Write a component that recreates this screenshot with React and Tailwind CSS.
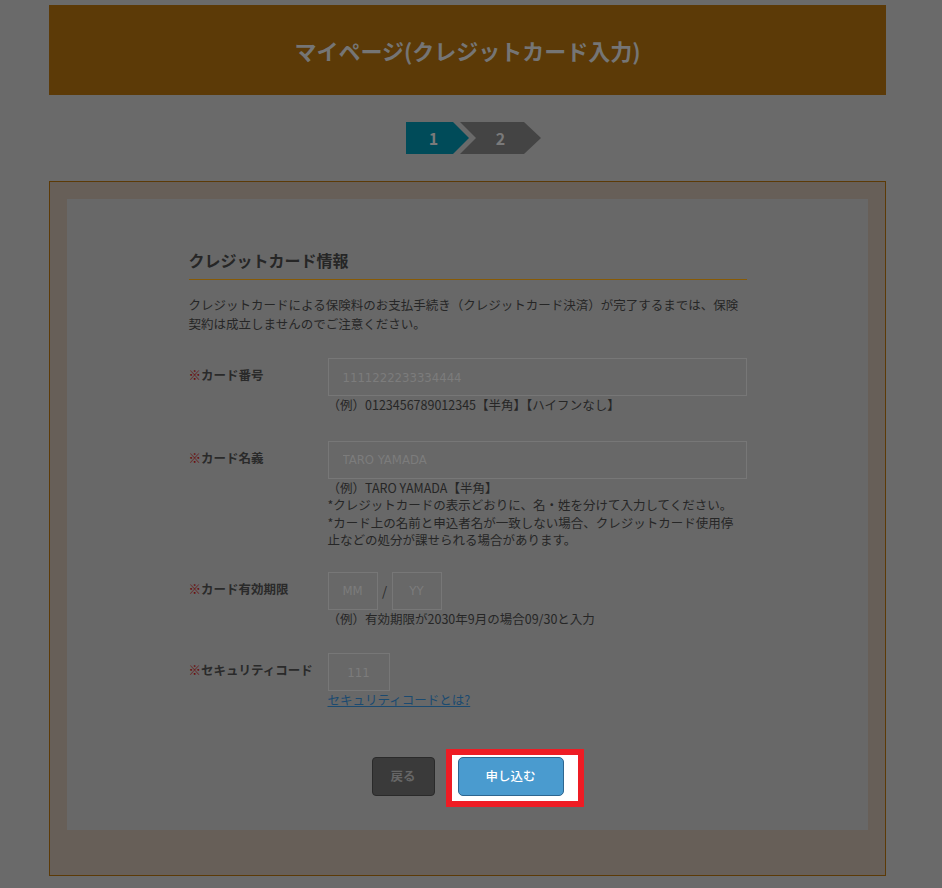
import React from "react";

const font = { fontFamily: '"Noto Sans CJK JP", "Noto Sans", sans-serif' };

function Label({ children }) {
  return (
    <div className="w-[139px] shrink-0 pt-[8px] text-[12.5px] font-bold leading-[18px] text-[#2a2a2a] whitespace-nowrap">
      <span className="text-[#6a0a0a]">※</span>
      {children}
    </div>
  );
}

function Hint({ children }) {
  return <div className="text-[12.5px] leading-[17.5px] text-[#262626] whitespace-nowrap">{children}</div>;
}

const inputCls =
  "h-[38px] border border-[#777777] bg-[#686868] text-[13px] text-[#333] outline-none placeholder:text-[#7c7c7c] font-['Liberation_Sans_Narrow','DejaVu_Sans_Condensed',sans-serif]";

export default function App() {
  return (
    <div className="min-h-screen bg-[#6a6a6a] pt-[5px]" style={font}>
      <div className="ml-[49px] flex h-[90px] w-[837px] items-center justify-center bg-[#5c3a07]">
        <h1 className="text-[22px] font-bold text-[#757575]">マイページ(クレジットカード入力)</h1>
      </div>

      <div className="mt-[27px] flex w-[942px] justify-center">
        <div className="relative ml-[5px] h-[32px] w-[136px]">
          <svg width="136" height="32" viewBox="0 0 136 32" className="block">
            <polygon points="0,0 47,0 63,16 47,32 0,32" fill="#004b59" />
            <polygon points="54,0 118,0 135,16 118,32 54,32 70,16" fill="#444444" />
          </svg>
          <span className="absolute left-[22px] top-0 flex h-[32px] w-[12px] items-center justify-center text-[16px] font-bold text-[#7a7a7a]">1</span>
          <span className="absolute left-[89px] top-0 flex h-[32px] w-[12px] items-center justify-center text-[16px] font-bold text-[#7a7a7a]">2</span>
        </div>
      </div>

      <div className="ml-[49px] mt-[27px] w-[837px] border border-[#5c3a07] bg-[#675f58] px-[17px] pt-[17px] pb-[45px]">
        <div className="flex h-[631px] justify-center bg-[#686868]">
          <div className="w-[558px] pt-[49px]">
            <h2 className="border-b-[1.5px] border-[#875a05] pb-[7px] text-[16px] font-bold leading-[24px] text-[#262626]">
              クレジットカード情報
            </h2>
            <p className="mt-[16px] text-[12.5px] leading-[18.5px] text-[#262626] whitespace-nowrap">
              クレジットカードによる保険料のお支払手続き（クレジットカード決済）が完了するまでは、保険
              <br />
              契約は成立しませんのでご注意ください。
            </p>

            <div className="mt-[25px] flex">
              <Label>カード番号</Label>
              <div className="flex-1">
                <input className={`${inputCls} w-full pl-[14px]`} placeholder="1111222233334444" />
                <Hint>（例）0123456789012345【半角】【ハイフンなし】</Hint>
              </div>
            </div>

            <div className="mt-[27px] flex">
              <Label>カード名義</Label>
              <div className="flex-1">
                <input className={`${inputCls} w-full pl-[14px]`} placeholder="TARO YAMADA" />
                <Hint>（例）TARO YAMADA【半角】</Hint>
                <Hint>*クレジットカードの表示どおりに、名・姓を分けて入力してください。</Hint>
                <Hint>*カード上の名前と申込者名が一致しない場合、クレジットカード使用停</Hint>
                <Hint>止などの処分が課せられる場合があります。</Hint>
              </div>
            </div>

            <div className="mt-[23px] flex">
              <Label>カード有効期限</Label>
              <div className="flex-1">
                <div className="flex items-center">
                  <input className={`${inputCls} w-[50px] text-center`} placeholder="MM" />
                  <span className="w-[14px] text-center text-[13px] text-[#2a2a2a]">/</span>
                  <input className={`${inputCls} w-[50px] text-center`} placeholder="YY" />
                </div>
                <Hint>（例）有効期限が2030年9月の場合09/30と入力</Hint>
              </div>
            </div>

            <div className="mt-[26px] flex">
              <Label>セキュリティコード</Label>
              <div className="flex-1">
                <input className={`${inputCls} w-[62px] text-center`} placeholder="111" />
                <div className="text-[12.5px] leading-[17.5px]">
                  <a href="#" className="text-[#1b4a70] underline">セキュリティコードとは?</a>
                </div>
              </div>
            </div>

            <div className="mt-[48px] flex justify-center">
              <div className="mr-[19px] flex">
                <button className="h-[39px] w-[63px] rounded-[4px] border border-[#2a2a2a] bg-[#3a3a3a] text-[12.5px] font-bold text-[#666]">
                  戻る
                </button>
              </div>
              <div className="relative ml-[4px]">
                <div className="absolute left-[-12px] top-[-8px] h-[58px] w-[138px] border-[6px] border-[#ee1c24] bg-white" />
                <button className="relative h-[39px] w-[106px] rounded-[5px] border border-[#2d6690] bg-[#4a9bcf] text-[12.5px] font-medium text-white">
                  申し込む
                </button>
              </div>
            </div>
          </div>
        </div>
      </div>
    </div>
  );
}
